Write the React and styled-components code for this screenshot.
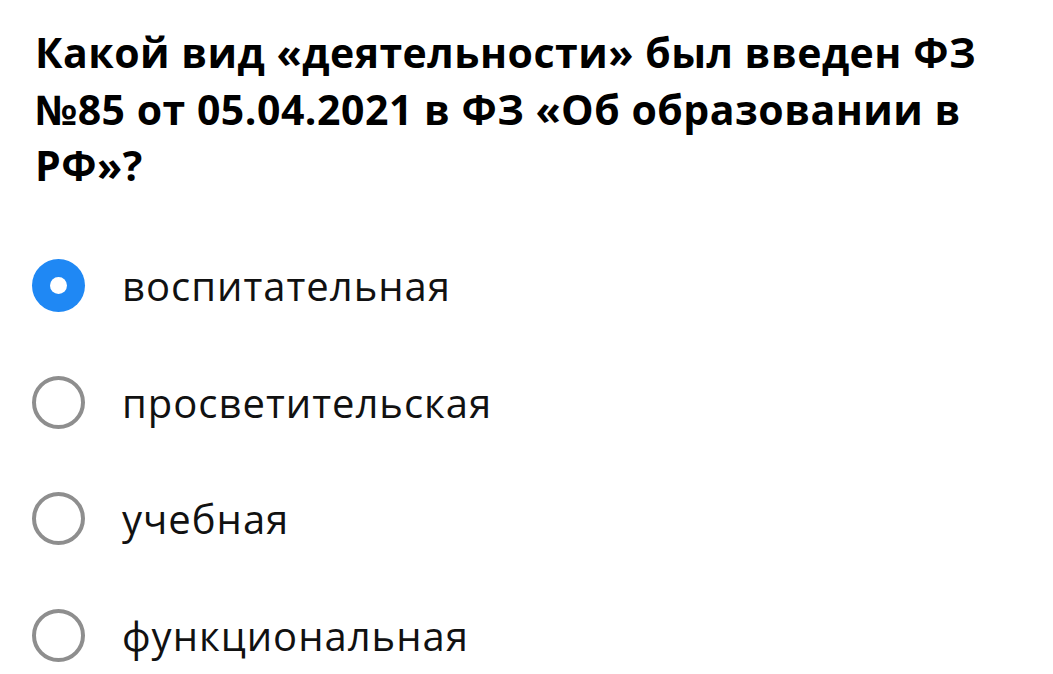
import React, { useState } from "react";
import styled, { createGlobalStyle } from "styled-components";

const GlobalStyle = createGlobalStyle`
  html, body {
    margin: 0;
    padding: 0;
    background: #ffffff;
  }
  body {
    font-family: "Open Sans", "Noto Sans", sans-serif;
    color: #000000;
  }
`;

const Page = styled.div`
  display: flex;
  flex-direction: column;
  padding: 24px 20px 0 35px;
`;

const Question = styled.h1`
  margin: 0;
  font-size: 41px;
  line-height: 56.5px;
  font-weight: 700;
  letter-spacing: 0.5px;
  color: #000;
  max-width: 975px;
`;

const Options = styled.div`
  display: flex;
  flex-direction: column;
  margin-top: 34px;
`;

const Row = styled.label`
  display: flex;
  align-items: center;
  height: 116.5px;
  gap: 37px;
  cursor: pointer;
`;

const Radio = styled.span`
  box-sizing: border-box;
  flex: none;
  width: 53px;
  height: 53px;
  border-radius: 50%;
  display: flex;
  align-items: center;
  justify-content: center;
  margin-left: -3px;
  background: ${(p) => (p.$checked ? "#1f88f4" : "transparent")};
  border: ${(p) => (p.$checked ? "none" : "4px solid #8e8e8e")};

  &::after {
    content: "";
    display: ${(p) => (p.$checked ? "block" : "none")};
    width: 17px;
    height: 17px;
    border-radius: 50%;
    background: #fff;
  }
`;

const OptionText = styled.span`
  font-size: 40px;
  font-weight: 400;
  letter-spacing: 1px;
  color: #111;
`;

const options = ["воспитательная", "просветительская", "учебная", "функциональная"];

const App = () => {
  const [selected, setSelected] = useState(0);

  return (
    <>
      <GlobalStyle />
      <Page>
        <Question>
          Какой вид «деятельности» был введен ФЗ №85 от 05.04.2021 в ФЗ «Об образовании в РФ»?
        </Question>
        <Options>
          {options.map((o, i) => (
            <Row key={o} onClick={() => setSelected(i)}>
              <Radio $checked={selected === i} />
              <OptionText>{o}</OptionText>
            </Row>
          ))}
        </Options>
      </Page>
    </>
  );
};

export default App;
